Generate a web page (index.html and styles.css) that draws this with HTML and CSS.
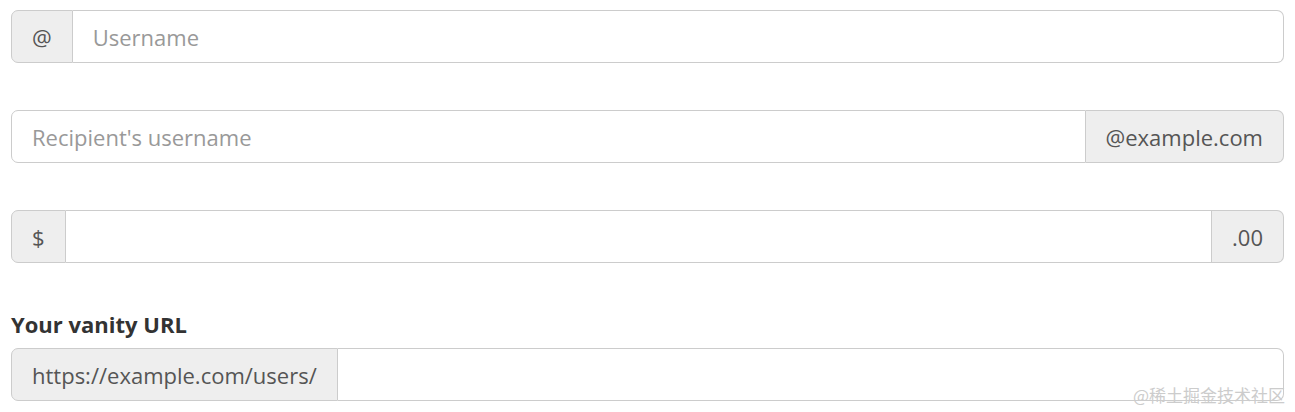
FILE: index.html
```html
<!DOCTYPE html>
<html>
<head>
<meta charset="utf-8">
<link rel="stylesheet" href="styles.css">
</head>
<body>
<div class="page">
  <div class="group">
    <span class="addon">@</span>
    <input class="field" type="text" placeholder="Username">
  </div>
  <div class="group">
    <input class="field" type="text" placeholder="Recipient's username">
    <span class="addon">@example.com</span>
  </div>
  <div class="group">
    <span class="addon">$</span>
    <input class="field" type="text">
    <span class="addon">.00</span>
  </div>
  <div class="block">
    <label class="label">Your vanity URL</label>
    <div class="group">
      <span class="addon">https://example.com/users/</span>
      <input class="field" type="text">
    </div>
  </div>
</div>
<div class="watermark">@稀土掘金技术社区</div>
</body>
</html>
```

FILE: styles.css
```css
html, body {
  margin: 0;
  padding: 0;
  background: #fff;
}
body {
  font-family: "Open Sans", "Noto Sans", sans-serif;
  color: #333;
}
.page {
  padding: 10px 11px 0 11px;
  display: flex;
  flex-direction: column;
  gap: 47px;
}
.group {
  display: flex;
  height: 53px;
  box-sizing: border-box;
}
.addon {
  display: flex;
  align-items: center;
  padding: 0 20px;
  background: #eee;
  border: 1px solid #ccc;
  color: #555;
  font-size: 22px;
  white-space: nowrap;
}
.field {
  flex: 1;
  min-width: 0;
  margin: 0;
  border: 1px solid #ccc;
  padding: 0 20px;
  font-family: inherit;
  font-size: 22px;
  color: #555;
  background: #fff;
  outline: none;
  box-sizing: border-box;
}
.field::placeholder {
  color: #999;
}
.group > :first-child {
  border-radius: 7px 0 0 7px;
}
.group > :last-child {
  border-radius: 0 7px 7px 0;
}
.group > .addon:first-child + .field {
  border-left: 0;
}
.group > .field + .addon {
  border-left: 0;
}
.block {
  display: flex;
  flex-direction: column;
  gap: 10px;
}
.label {
  font-weight: bold;
  font-size: 22px;
  line-height: 28px;
  color: #333;
}
.watermark {
  position: absolute;
  right: 10px;
  bottom: 5px;
  font-family: "Noto Sans CJK SC", sans-serif;
  font-size: 17px;
  color: #cccccc;
}
```
